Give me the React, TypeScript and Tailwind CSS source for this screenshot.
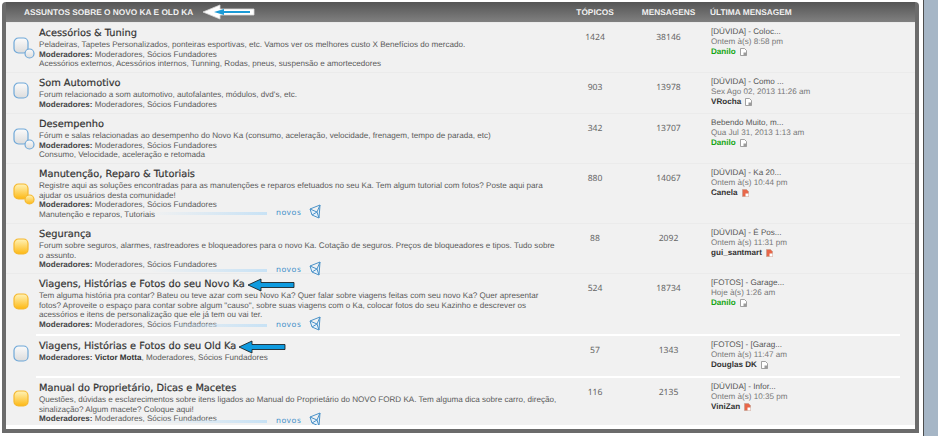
const BLUE = { stroke: '#6fa8d8', top: '#fbfbfb', bottom: '#dcdcdc' };
const GOLD = { stroke: '#f5b82e', top: '#fff3b8', bottom: '#fdb813' };

type Forum = {
  h: string;
  icon: 'blue' | 'blue2' | 'gold' | 'gold2';
  title: string;
  desc: string[];
  mods: string;
  strongMod?: string;
  sub?: string;
  topics: string;
  posts: string;
  last: string;
  date: string;
  user: string;
  green?: boolean;
  red?: boolean;
  novos?: string;
};

const forums: Forum[] = [
  { h: 'h-[50px]', icon: 'blue2', title: 'Acessórios & Tuning', desc: ['Peladeiras, Tapetes Personalizados, ponteiras esportivas, etc. Vamos ver os melhores custo X Benefícios do mercado.'], mods: 'Moderadores, Sócios Fundadores', sub: 'Acessórios externos, Acessórios internos, Tunning, Rodas, pneus, suspensão e amortecedores', topics: '1424', posts: '38146', last: '[DÚVIDA] - Coloc...', date: 'Ontem à(s) 8:58 pm', user: 'Danilo', green: true },
  { h: 'h-[41px]', icon: 'blue', title: 'Som Automotivo', desc: ["Forum relacionado a som automotivo, autofalantes, módulos, dvd's, etc."], mods: 'Moderadores, Sócios Fundadores', topics: '903', posts: '13978', last: '[DÚVIDA] - Como ...', date: 'Sex Ago 02, 2013 11:26 am', user: 'VRocha' },
  { h: 'h-[50px]', icon: 'blue2', title: 'Desempenho', desc: ['Fórum e salas relacionadas ao desempenho do Novo Ka (consumo, aceleração, velocidade, frenagem, tempo de parada, etc)'], mods: 'Moderadores, Sócios Fundadores', sub: 'Consumo, Velocidade, aceleração e retomada', topics: '342', posts: '13707', last: 'Bebendo Muito, m...', date: 'Qua Jul 31, 2013 1:13 am', user: 'Danilo', green: true },
  { h: 'h-[60px]', icon: 'gold2', title: 'Manutenção, Reparo & Tutoriais', desc: ['Registre aqui as soluções encontradas para as manutenções e reparos efetuados no seu Ka. Tem algum tutorial com fotos? Poste aqui para', 'ajudar os usuários desta comunidade!'], mods: 'Moderadores, Sócios Fundadores', sub: 'Manutenção e reparos, Tutoriais', topics: '880', posts: '14067', last: '[DÚVIDA] - Ka 20...', date: 'Ontem à(s) 10:44 pm', user: 'Canela', red: true, novos: 'bottom-[4px]' },
  { h: 'h-[50px]', icon: 'gold', title: 'Segurança', desc: ['Forum sobre seguros, alarmes, rastreadores e bloqueadores para o novo Ka. Cotação de seguros. Preços de bloqueadores e tipos. Tudo sobre', 'o assunto.'], mods: 'Moderadores, Sócios Fundadores', topics: '88', posts: '2092', last: '[DÚVIDA] - É Pos...', date: 'Ontem à(s) 11:31 pm', user: 'gui_santmart', red: true, novos: '-bottom-[3px]' },
  { h: 'h-[61px]', icon: 'gold', title: 'Viagens, Histórias e Fotos do seu Novo Ka', desc: ['Tem alguma história pra contar? Bateu ou teve azar com seu Novo Ka? Quer falar sobre viagens feitas com seu novo Ka? Quer apresentar', 'fotos? Aproveite o espaço para contar sobre algum "causo", sobre suas viagens com o Ka, colocar fotos do seu Kazinho e descrever os', 'acessórios e itens de personalização que ele já tem ou vai ter.'], mods: 'Moderadores, Sócios Fundadores', topics: '524', posts: '18734', last: '[FOTOS] - Garage...', date: 'Hoje à(s) 1:26 am', user: 'Danilo', green: true, novos: 'bottom-[3px]' },
  { h: 'h-[40px]', icon: 'blue', title: 'Viagens, Histórias e Fotos do seu Old Ka', desc: [], strongMod: 'Victor Motta', mods: ', Moderadores, Sócios Fundadores', topics: '57', posts: '1343', last: '[FOTOS] - [Garag...', date: 'Ontem à(s) 11:47 am', user: 'Douglas DK' },
  { h: 'h-[46px]', icon: 'gold', title: 'Manual do Proprietário, Dicas e Macetes', desc: ['Questões, dúvidas e esclarecimentos sobre itens ligados ao Manual do Proprietário do NOVO FORD KA. Tem alguma dica sobre carro, direção,', 'sinalização? Algum macete? Coloque aqui!'], mods: 'Moderadores, Sócios Fundadores', topics: '116', posts: '2135', last: '[DÚVIDA] - Infor...', date: 'Ontem à(s) 10:35 pm', user: 'ViniZan', red: true, novos: '-bottom-[3px]' },
];

function TopicIcon({ kind }: { kind: Forum['icon'] }) {
  const c = kind.startsWith('gold') ? GOLD : BLUE;
  const id = kind.startsWith('gold') ? 'gradGold' : 'gradBlue';
  return (
    <svg width="22" height="22" viewBox="0 0 22 22" className="shrink-0">
      <defs>
        <linearGradient id={id} x1="0" y1="0" x2="0" y2="1">
          <stop offset="0" stopColor={c.top} />
          <stop offset="1" stopColor={c.bottom} />
        </linearGradient>
      </defs>
      <rect x="1" y="1" width="14" height="15" rx="4.5" fill={`url(#${id})`} stroke={c.stroke} strokeWidth="1.2" />
      {kind.endsWith('2') && <circle cx="16.5" cy="16.5" r="4.5" fill={`url(#${id})`} stroke={c.stroke} strokeWidth="1.2" />}
    </svg>
  );
}

function LastPostIcon({ red }: { red?: boolean }) {
  return (
    <svg width="7" height="8" viewBox="0 0 7 8" className="ml-[4px] inline-block">
      <path d="M0.5 0.5H4.5L6.5 2.5V7.5H0.5Z" fill={red ? '#e8674a' : '#ffffff'} stroke={red ? '#c9a090' : '#8a8a8a'} strokeWidth="0.8" />
      <path d="M3.5 4.5H6.5V7.5H3.5Z" fill={red ? '#ffffff' : '#9a9a9a'} />
    </svg>
  );
}

function ArrowBlue() {
  return (
    <svg width="48" height="14" viewBox="0 0 48 14" className="-my-[2px] ml-[2px] shrink-0">
      <path d="M1 7L14 1V4.5H47V9.5H14V13Z" fill="#0f9bdf" stroke="#111111" strokeWidth="0.8" />
    </svg>
  );
}

function HeaderArrow() {
  return (
    <svg width="54" height="16" viewBox="0 0 54 16" className="ml-[9px] shrink-0">
      <path d="M1 8L18 1V5H52V11H18V15Z" fill="#ffffff" stroke="#d8d8d8" strokeWidth="0.8" />
      <path d="M12 8L22 5V7H48V9H22V11Z" fill="#1b9ad6" />
    </svg>
  );
}

function Novos({ pos }: { pos: string }) {
  return (
    <div className={`absolute left-[110px] flex items-center ${pos}`}>
      <div className="h-[3px] w-[118px] bg-gradient-to-r from-transparent to-[#c8e2f5]" />
      <span className="ml-[9px] w-[33px] font-['Noto_Sans'] text-[#3f8fc9] [font-size:8px] tracking-[0.6px]">novos</span>
      <svg width="12" height="15" viewBox="0 0 12 15" className="-mt-[3px]">
        <path d="M1 5L11 1L10 14L3 11Z M1 5L8 8L11 1 M8 8L10 14 M8 8L3 11" fill="#e6f1fa" stroke="#4c93c9" strokeWidth="1" strokeLinejoin="round" />
      </svg>
    </div>
  );
}

function Row({ f, index }: { f: Forum; index: number }) {
  const arrow = index === 5 || index === 6;
  return (
    <>
      {index >= 6 && <div className="ml-[30px] mr-[15px] h-[2px] shrink-0 bg-white" />}
      <div className={`flex shrink-0 ${f.h} ${index >= 6 ? '' : 'border-t border-[#ebebeb]'}`}>
        <div className="flex w-[33px] shrink-0 items-center pl-[7px]">
          <TopicIcon kind={f.icon} />
        </div>
        <div className="relative flex w-[519px] shrink-0 flex-col pt-[5px] leading-[9.6px] text-[#5a5a5a] [font-size:8.1px]">
          <div className="mb-[1px] flex items-center leading-[11px] text-[#333333]">
            <span className="font-['DejaVu_Sans'] [font-size:9.8px] [-webkit-text-stroke:0.2px_#333333]">{f.title}</span>
            {arrow && <ArrowBlue />}
          </div>
          {f.desc.map((line) => (
            <div key={line} className="whitespace-nowrap">{line}</div>
          ))}
          <div className="whitespace-nowrap">
            <b className="text-[#444444]">Moderadores: </b>
            {f.strongMod && <b className="text-[#333333]">{f.strongMod}</b>}
            {f.mods}
          </div>
          {f.sub && <div className="whitespace-nowrap">{f.sub}</div>}
          {f.novos && <Novos pos={f.novos} />}
        </div>
        <div className="w-[74px] shrink-0 pt-[8px] text-center font-['Noto_Sans'] text-[#666666] [font-size:8.6px]">{f.topics}</div>
        <div className="w-[73px] shrink-0 pt-[8px] text-center font-['Noto_Sans'] text-[#666666] [font-size:8.6px]">{f.posts}</div>
        <div className="flex-1 whitespace-nowrap pl-[6px] pt-[4px] leading-[10px] text-[#666666] [font-size:8.1px]">
          <div className="text-[#555555]">{f.last}</div>
          <div className="text-[#777777]">{f.date}</div>
          <div className="flex items-center">
            <b className={f.green ? 'text-[#14a514]' : 'text-[#333333]'}>{f.user}</b>
            <LastPostIcon red={f.red} />
          </div>
        </div>
      </div>
    </>
  );
}

export default function App() {
  return (
    <div className="flex h-[436px] w-[938px] overflow-hidden bg-white font-['Liberation_Sans',sans-serif] [text-rendering:geometricPrecision]">
      <div className="ml-[2px] mt-[2px] flex h-[431px] w-[917px] shrink-0 flex-col overflow-hidden rounded-t-[4px] border-x-[4px] border-b-[4px] border-[#6b6b6b] bg-[#f1f1f1]">
        <div className="flex h-[20px] shrink-0 items-center bg-gradient-to-b from-[#555555] to-[#808080] font-bold text-[#f1f1f1] [font-size:8.3px]">
          <div className="flex w-[552px] shrink-0 items-center pl-[18px]">
            <span>ASSUNTOS SOBRE O NOVO KA E OLD KA</span>
            <HeaderArrow />
          </div>
          <span className="w-[74px] text-center">TÓPICOS</span>
          <span className="w-[73px] text-center">MENSAGENS</span>
          <span className="pl-[5px]">ÚLTIMA MENSAGEM</span>
        </div>
        {forums.map((f, i) => (
          <Row key={f.title} f={f} index={i} />
        ))}
        <div className="relative z-10 mt-auto h-[4px] shrink-0 bg-white" />
      </div>
      <div className="ml-[4px] w-px shrink-0 bg-[#4d4d4d]" />
      <div className="w-[14px] shrink-0 bg-[#a6b6c6]" />
    </div>
  );
}
